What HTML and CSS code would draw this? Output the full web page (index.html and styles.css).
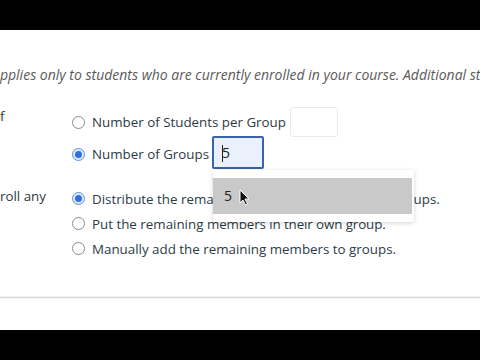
FILE: index.html
```html
<!DOCTYPE html>
<html>
<head>
<meta charset="utf-8">
<link rel="stylesheet" href="styles.css">
</head>
<body>
<div class="bar"></div>
<main class="page">
  <p class="note">applies only to students who are currently enrolled in your course. Additional students</p>
  <div class="group g1">
    <div class="label">f</div>
    <div class="options">
      <div class="row r-tall">
        <span class="radio"></span>
        <span class="text">Number of Students per Group</span>
        <span class="input"></span>
      </div>
      <div class="row r-tall">
        <span class="radio on"></span>
        <span class="text">Number of Groups</span>
        <span class="input focus"><span class="caret"></span>5
          <div class="menu">
            <div class="item">5
              <svg class="cursor" width="12" height="17" viewBox="0 0 12 17"><path d="M1 1 L1 14 L4 11 L6.5 16 L8.5 15 L6 10 L10 10 Z" fill="#111" stroke="#fff" stroke-width="1"/></svg>
            </div>
          </div>
        </span>
      </div>
    </div>
  </div>
  <div class="group g2">
    <div class="label">roll any</div>
    <div class="options">
      <div class="row">
        <span class="radio on"></span>
        <span class="text">Distribute the rema<span class="tight1">ining members evenly among</span> groups.</span>
      </div>
      <div class="row">
        <span class="radio"></span>
        <span class="text">Put the remaining <span class="tight2">members in their own group.</span></span>
      </div>
      <div class="row">
        <span class="radio"></span>
        <span class="text">Manually add the remaining members to groups.</span>
      </div>
    </div>
  </div>
  <div class="footer"></div>
</main>
<div class="bar"></div>
</body>
</html>
```
FILE: styles.css
```css
* { box-sizing: border-box; }
html, body { margin: 0; padding: 0; }
body {
  width: 480px;
  height: 360px;
  overflow: hidden;
  background: #000;
  font-family: "Open Sans", "Liberation Sans", sans-serif;
  color: #2d3b45;
}
.bar { height: 30px; background: #000; }
.page {
  height: 300px;
  background: #fff;
  overflow: hidden;
  display: flex;
  flex-direction: column;
  padding-top: 35px;
}
.note {
  margin: 0;
  font-style: italic;
  font-size: 14px;
  line-height: 20px;
  color: #5a5a5a;
  white-space: nowrap;
  text-indent: -8px;
}
.group {
  display: flex;
}
.g1 { margin-top: 21px; }
.g2 { margin-top: 16px; }
.label {
  width: 71px;
  flex: none;
  font-size: 13.35px;
  line-height: 20px;
  color: #2d3b45;
  white-space: nowrap;
}
.options { display: flex; flex-direction: column; }
.row {
  display: flex;
  align-items: center;
  height: 25px;
  font-size: 13.35px;
  white-space: nowrap;
}
.r-tall { height: 32px; }
.radio {
  width: 13px;
  height: 13px;
  border-radius: 50%;
  border: 1px solid #8a8a8a;
  background: #fff;
  margin-left: 1px;
  margin-right: 7px;
  flex: none;
  position: relative;
}
.radio.on {
  border-color: #5b8ee6;
  background: #fff;
  box-shadow: inset 0 0 0 2px #dce8fb;
}
.radio.on::after {
  content: "";
  position: absolute;
  left: 2px; top: 2px;
  width: 7px; height: 7px;
  border-radius: 50%;
  background: #2f6fe0;
}
.text { color: #2d3b45; }
.tight1 { letter-spacing: -0.3px; }
.tight2 { letter-spacing: -0.1px; }
.input {
  margin-left: 4px;
  width: 48px;
  height: 30px;
  border: 1px solid #eaeaea;
  border-radius: 3px;
  background: #fff;
  flex: none;
}
.input.focus {
  position: relative;
  margin-left: 3px;
  margin-top: -4px;
  width: 52px;
  height: 33px;
  border: 2px solid #3a63a8;
  border-radius: 2px;
  background: #eaf1fd;
  font-size: 14px;
  line-height: 29px;
  padding-left: 8px;
  color: #222;
}
.caret {
  position: absolute;
  left: 8px; top: 7px;
  width: 1px; height: 17px;
  background: #222;
}
.menu {
  position: absolute;
  left: -1px;
  top: 32px;
  width: 201px;
  padding: 8px 2px 8px 0;
  background: #fff;
  box-shadow: 0 1px 4px rgba(0,0,0,0.18);
  border-radius: 2px;
  z-index: 5;
}
.item {
  position: relative;
  height: 36px;
  line-height: 36px;
  padding-left: 11px;
  background: #c9c9c9;
  color: #222;
  font-size: 14px;
}
.cursor {
  position: absolute;
  left: 26px;
  top: 11px;
}
.footer {
  margin-top: auto;
  margin-bottom: 31px;
  height: 3px;
  border-top: 1px solid #efefef;
  border-bottom: 1px solid #f4f4f4;
  background: #dcdcdc;
  background-clip: padding-box;
}
```
